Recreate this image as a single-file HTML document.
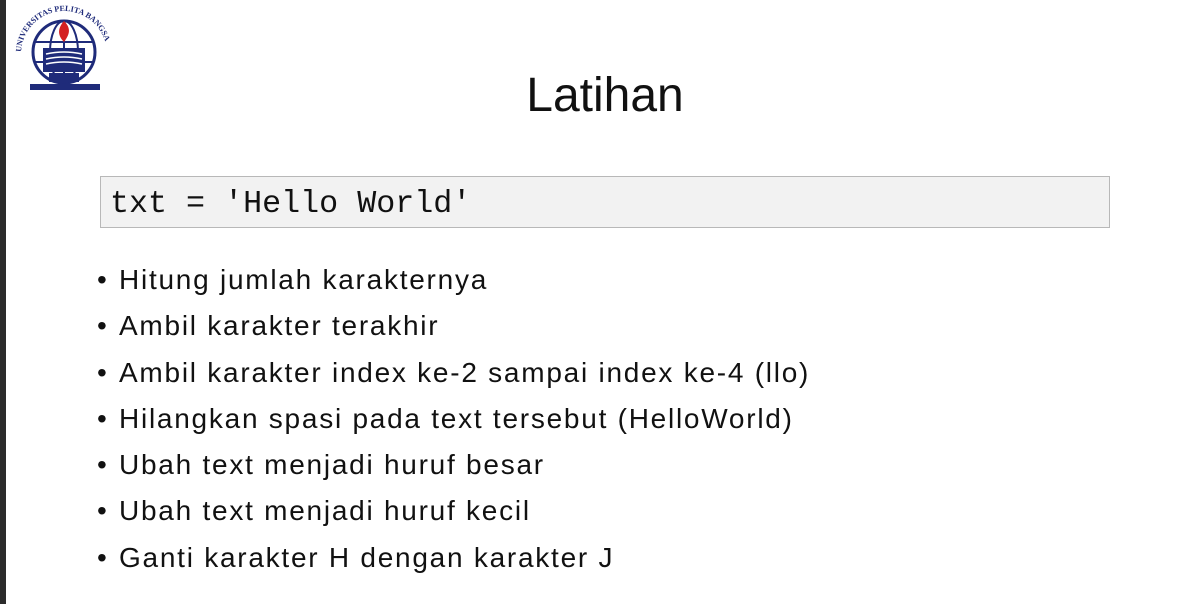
<!DOCTYPE html>
<html><head><meta charset="utf-8"><style>
body{margin:0;width:1200px;height:604px;background:#fff;position:relative;overflow:hidden;font-family:"Liberation Sans",sans-serif;}
.strip{position:absolute;left:0;top:0;width:6px;height:604px;background:#2b2b2b;}
h1{position:absolute;left:0;width:1210px;text-align:center;top:68px;margin:0;font-weight:normal;font-size:48px;color:#111;line-height:56px;}
.box{position:absolute;left:100px;top:176px;width:1008px;height:50px;background:#f2f2f2;border:1px solid #b8b8b8;}
.code{position:absolute;left:110px;top:186px;font-family:"Liberation Mono",monospace;font-size:31.7px;line-height:36px;color:#111;}
ul{position:absolute;left:97px;top:257px;margin:0;padding:0;list-style:none;}
li{font-size:28px;line-height:46.3px;color:#111;white-space:nowrap;letter-spacing:1.75px;}
li:before{content:"•";display:inline-block;width:22px;letter-spacing:0;}
</style></head><body>
<div class="strip"></div>
<svg style="position:absolute;left:14px;top:4px" width="100" height="90" viewBox="0 0 100 90">
<defs><path id="arc" d="M7 50 A43 43 0 0 1 93 50"/></defs>
<text font-family="Liberation Serif" font-size="8" font-weight="bold" fill="#1f2b7a"><textPath href="#arc" startOffset="2">UNIVERSITAS PELITA BANGSA</textPath></text>
<circle cx="50" cy="48" r="31" fill="none" stroke="#1f2b7a" stroke-width="3"/>
<ellipse cx="50" cy="48" rx="14" ry="31" fill="none" stroke="#1f2b7a" stroke-width="2"/>
<line x1="20" y1="38" x2="80" y2="38" stroke="#1f2b7a" stroke-width="2"/>
<line x1="21" y1="58" x2="79" y2="58" stroke="#1f2b7a" stroke-width="2"/>
<line x1="50" y1="17" x2="50" y2="79" stroke="#1f2b7a" stroke-width="2"/>
<path d="M50 17 C42 26 45 33 50 38 C55 31 58 25 50 17Z" fill="#d42020"/>
<path d="M29 44 L71 44 L71 68 L29 68Z" fill="#1f2b7a"/>
<path d="M32 50 Q50 46 68 50 M32 55 Q50 51 68 55 M32 60 Q50 56 68 60" stroke="#fff" stroke-width="1.5" fill="none"/>
<rect x="35" y="69" width="30" height="9" fill="#1f2b7a"/>
<rect x="16" y="80" width="70" height="6" fill="#1f2b7a"/>
</svg>
<h1>Latihan</h1>
<div class="box"></div>
<div class="code">txt = 'Hello World'</div>
<ul>
<li>Hitung jumlah karakternya</li>
<li>Ambil karakter terakhir</li>
<li>Ambil karakter index ke-2 sampai index ke-4 (llo)</li>
<li>Hilangkan spasi pada text tersebut (HelloWorld)</li>
<li>Ubah text menjadi huruf besar</li>
<li>Ubah text menjadi huruf kecil</li>
<li>Ganti karakter H dengan karakter J</li>
</ul>
</body></html>
